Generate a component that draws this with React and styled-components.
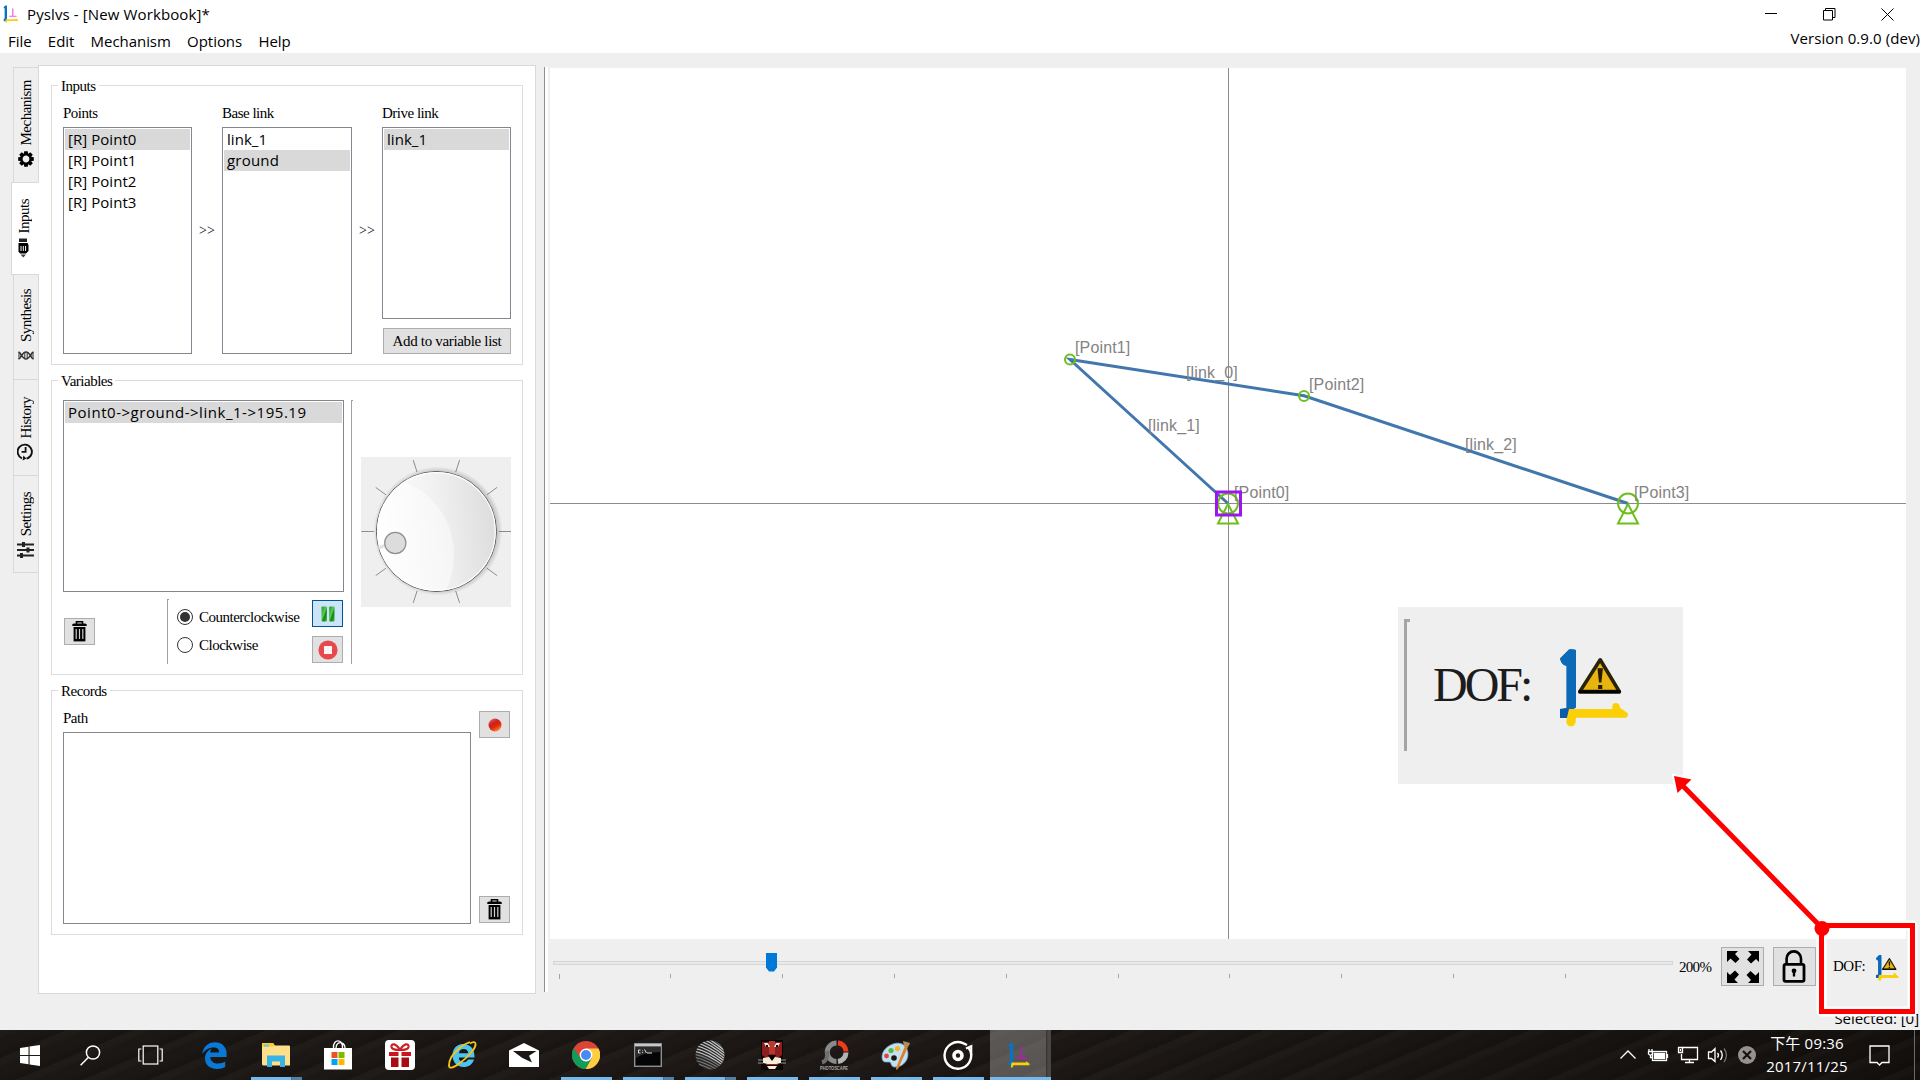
import React from 'react';
import styled, { createGlobalStyle, css } from 'styled-components';

const sans = '"Open Sans", "Noto Sans", "Noto Sans CJK TC", sans-serif';
const serif = '"Liberation Serif", "Noto Sans CJK TC", serif';

const GlobalStyle = createGlobalStyle`
  * { box-sizing: border-box; }
  html, body { margin: 0; padding: 0; background: #efefef; overflow: hidden; }
`;

const Screen = styled.div`
  position: relative;
  display: flex;
  flex-direction: column;
  width: 1920px;
  height: 1080px;
  background: #efefef;
  color: #000;
  font: 15px/20px ${sans};
  white-space: nowrap;
  overflow: hidden;
`;

/* ---------- window chrome ---------- */
const Header = styled.header`
  display: flex;
  justify-content: space-between;
  height: 53px;
  flex: none;
  background: #fff;
`;
const HeaderLeft = styled.div`
  display: flex;
  flex-direction: column;
`;
const TitleRow = styled.div`
  display: flex;
  align-items: center;
  gap: 8px;
  height: 29px;
  padding-left: 3px;
  letter-spacing: 0.12px;
`;
const Menu = styled.nav`
  display: flex;
  align-items: center;
  height: 25px;
  padding-left: 8px;
  gap: 16.3px;
  letter-spacing: -0.05px;
`;
const HeaderRight = styled.div`
  display: flex;
  flex-direction: column;
  align-items: flex-end;
`;
const WindowButtons = styled.div`
  display: flex;
  align-items: center;
  height: 28px;
  padding-right: 26px;
  gap: 45.5px;
`;
const Version = styled.div`
  height: 21px;
  line-height: 20px;
  letter-spacing: 0.08px;
`;

/* ---------- side panel ---------- */
const Workspace = styled.main`
  display: flex;
  height: 941px;
  flex: none;
`;
const TabBar = styled.div`
  display: flex;
  flex-direction: column;
  align-items: flex-end;
  width: 39px;
  padding-top: 14px;
  z-index: 1;
`;
const Tab = styled.div`
  display: flex;
  flex-direction: column;
  align-items: center;
  justify-content: flex-end;
  gap: ${(p) => p.$gap ?? 6}px;
  width: ${(p) => (p.$active ? 28 : 26)}px;
  height: ${(p) => p.$h}px;
  padding-bottom: ${(p) => p.$bottom}px;
  padding-right: ${(p) => (p.$active ? 3 : 1)}px;
  background: ${(p) => (p.$active ? '#fff' : '#efefef')};
  border: 1px solid #d9d9d9;
  border-right-color: ${(p) => (p.$active ? '#fff' : '#d9d9d9')};
  & + & { margin-top: -1px; }
`;
const TabLabel = styled.span`
  writing-mode: vertical-rl;
  transform: rotate(180deg);
  margin-left: 1px;
  font: 15px/18px ${serif};
  letter-spacing: -0.5px;
`;
const Pane = styled.section`
  display: flex;
  flex-direction: column;
  gap: 15px;
  width: 498px;
  height: 929px;
  margin: 12px 0 0 -1px;
  padding: 19px 12px 0 12px;
  background: #fff;
  border: 1px solid #d9d9d9;
`;
const Group = styled.div`
  display: flex;
  flex-direction: column;
  width: 472px;
  height: ${(p) => p.$h}px;
  border: 1px solid #dcdcdc;
  padding: 0 11px;
  font: 15px/18px ${serif};
  letter-spacing: -0.5px;
`;
const GroupTitle = styled.div`
  align-self: flex-start;
  height: 18px;
  margin: -9px 0 0 -5px;
  padding: 0 3px;
  background: #fff;
`;
const InputsBody = styled.div`
  display: flex;
  height: 260px;
  padding-top: 5px;
`;
const Column = styled.div`
  display: flex;
  flex-direction: column;
  flex: none;
  width: ${(p) => p.$w ?? 129}px;
`;
const Caption = styled.div`
  height: 27px;
  padding-top: 4px;
`;
const Chevrons = styled.div`
  display: flex;
  flex: none;
  align-items: center;
  justify-content: center;
  width: 30px;
  padding-top: 7px;
  font-size: 14px;
  letter-spacing: 0;
`;
const List = styled.div`
  width: 100%;
  height: ${(p) => p.$h}px;
  flex: none;
  padding: 1px;
  border: 1px solid #828790;
  background: #fff;
  font: 15px/21px ${sans};
`;
const ListItem = styled.div`
  height: 21px;
  padding-left: 3px;
  letter-spacing: ${(p) => p.$spacing ?? 0.05}px;
  background: ${(p) => (p.$selected ? '#d9d9d9' : 'transparent')};
`;
const Button = styled.button`
  display: flex;
  align-items: center;
  justify-content: center;
  width: ${(p) => p.$w ?? 31}px;
  height: ${(p) => p.$h ?? 27}px;
  flex: none;
  padding: 0;
  font: 15px/18px ${serif};
  letter-spacing: -0.33px;
  color: #000;
  background: #e1e1e1;
  border: 1px solid #adadad;
  ${(p) => p.$checked && css`
    background: #cce4f7;
    border-color: #00549a;
  `}
`;
const AddButton = styled(Button)`
  margin: 9px 0 0 1px;
`;

const VariablesBody = styled.div`
  display: flex;
  padding-top: 10px;
  height: 275px;
`;
const VariableColumn = styled.div`
  display: flex;
  flex-direction: column;
  flex: none;
  width: 281px;
`;
const PlayRow = styled.div`
  display: flex;
  height: 65px;
  margin-top: 7px;
`;
const TrashSlot = styled.div`
  flex: none;
  width: 104px;
  padding: 19px 0 0 1px;
`;
const VLine = styled.div`
  width: 2px;
  flex: none;
  height: ${(p) => p.$h}px;
  margin-left: ${(p) => p.$left ?? 0}px;
  border-left: 1px solid #a0a0a0;
  border-top: 1px solid #a0a0a0;
`;
const Radios = styled.div`
  display: flex;
  flex: none;
  flex-direction: column;
  gap: 10px;
  width: 143px;
  padding: 9px 0 0 8px;
`;
const RadioLine = styled.label`
  display: flex;
  align-items: center;
  height: 18px;
  gap: 6px;
`;
const Radio = styled.span`
  display: flex;
  align-items: center;
  justify-content: center;
  width: 16px;
  height: 16px;
  border: 1px solid #333;
  border-radius: 50%;
  &::after {
    content: '';
    width: 10px;
    height: 10px;
    border-radius: 50%;
    background: ${(p) => (p.$on ? '#333' : 'transparent')};
  }
`;
const PlayButtons = styled.div`
  display: flex;
  flex-direction: column;
  gap: 9px;
  padding-top: 1px;
`;
const DialBox = styled.div`
  flex: none;
  width: 150px;
  height: 150px;
  margin: 57px 0 0 8px;
  background: #efefef;
`;

const RecordsBody = styled.div`
  display: flex;
  gap: 8px;
  padding-top: 10px;
  height: 224px;
`;
const RecordCaption = styled.div`
  height: 23px;
  line-height: 17px;
`;
const RecordButtons = styled.div`
  display: flex;
  flex-direction: column;
  justify-content: space-between;
  height: 212px;
  margin-top: 1px;
`;

const Splitter = styled.div`
  width: 14px;
  padding: 14px 0 0 8px;
  &::before {
    content: '';
    display: block;
    width: 3px;
    height: 925px;
    background: #fff;
    border-left: 1px solid #8f8f8f;
  }
`;

/* ---------- canvas side ---------- */
const CanvasColumn = styled.section`
  display: flex;
  flex-direction: column;
  width: 1356px;
  padding-top: 15px;
`;
const Canvas = styled.div`
  height: 871px;
  flex: none;
  background: #fff;
`;
const ZoomBar = styled.div`
  display: flex;
  height: 55px;
`;
const SliderBox = styled.div`
  flex: none;
  width: 1129px;
`;
const ZoomText = styled.div`
  flex: none;
  width: 42px;
  padding-top: 18px;
  font: 15px/20px ${serif};
  letter-spacing: -0.7px;
`;
const ZoomButtons = styled.div`
  display: flex;
  flex: none;
  gap: 9px;
  padding-top: 8px;
`;
const Dof = styled.div`
  display: flex;
  flex: none;
  padding: 16px 0 0 17px;
  gap: 11px;
  font: 15px/23px ${serif};
  letter-spacing: -0.5px;
`;
const StatusBar = styled.footer`
  display: flex;
  justify-content: flex-end;
  height: 36px;
  flex: none;
  padding: 14px 1px 0 0;
  letter-spacing: -0.05px;
`;

/* ---------- annotations ---------- */
const Callout = styled.div`
  position: absolute;
  left: 1398px;
  top: 607px;
  display: flex;
  width: 285px;
  height: 177px;
  padding: 12px 0 0 6px;
  background: #efefef;
`;
const CalloutLine = styled.div`
  width: 6px;
  height: 132px;
  border-left: 3px solid #a5a5a5;
  border-top: 3px solid #a5a5a5;
`;
const CalloutText = styled.div`
  flex: none;
  width: 150px;
  padding: 41px 0 0 23px;
  font: 48px/50px ${serif};
  letter-spacing: -3px;
  color: #1c1c1c;
`;
const CalloutIcon = styled.div`
  padding-top: 30px;
`;
const Overlay = styled.svg`
  position: absolute;
  left: 0;
  top: 0;
`;

/* ---------- taskbar ---------- */
const Taskbar = styled.div`
  display: flex;
  justify-content: space-between;
  height: 50px;
  flex: none;
  background:
    repeating-linear-gradient(157deg, rgba(255,240,220,.018) 0 5px, transparent 9px 17px, rgba(0,0,0,.12) 22px 26px),
    linear-gradient(90deg, #1b1714, #1d1815 45%, #1a1613 70%, #14100e);
`;
const Apps = styled.div`
  display: flex;
`;
const AppButton = styled.div`
  position: relative;
  display: flex;
  align-items: center;
  justify-content: center;
  width: ${(p) => p.$w ?? 62}px;
  height: 50px;
  padding-left: ${(p) => p.$shift ?? 0}px;
  background: ${(p) => (p.$active ? 'linear-gradient(90deg, rgba(255,255,255,.27) 56px, #33302e 56px, #4a4644 58px, #4a4644)' : 'none')};
  ${(p) => p.$active && css`margin-left: 1px; padding-right: 3px;`}
  &::after {
    content: '';
    position: absolute;
    left: ${(p) => (p.$active ? 0 : 6)}px;
    right: ${(p) => (p.$active ? 0 : 5)}px;
    bottom: 0;
    height: 3px;
    background: ${(p) => (p.$mark === 'many' ? 'linear-gradient(90deg, #76b9ed 0, #76b9ed 40px, #3d5c74 40px, #567fa3 41px)' : p.$mark ? '#76b9ed' : 'none')};
  }
`;
const Tray = styled.div`
  display: flex;
  align-items: center;
  color: #fff;
  padding-right: 5px;
`;
const TrayIcons = styled.svg`
  flex: none;
`;
const Clock = styled.div`
  display: flex;
  flex-direction: column;
  align-items: center;
  width: 90px;
  font: 15px/23px ${sans};
  letter-spacing: 0.2px;
  padding-bottom: 1px;
`;
const Notice = styled.div`
  display: flex;
  align-items: center;
  height: 50px;
  width: 63px;
  padding-left: 17px;
  border-right: 1px solid #6d6967;
`;

/* ---------- icons ---------- */
const Logo = ({ w, h }) => (
  <svg width={w} height={h} viewBox="0 0 23 26">
    <path d="M0 3.2 3 .2Q4 0 5.300.3V19.5L0 23V20L2.200 19.6V5.600Q.600 5.600 0 3.200Z" fill="#0a6ab8" />
    <path d="M0 3.200 3 .2Q4 0 5.300 .3V19.500L2.200 21V5.600Q.6 5.600 0 3.200Z" fill="#0a6ab8" />
    <path d="M0 20H5V23H0Z" fill="#0a5cab" />
    <path d="M3 20H17.400Q17.300 18.200 18.400 18Q20 18 20 19.600L22.600 21.400Q22.800 22.400 22 22.900H5.300Q5.400 25.800 3.700 25.800Q2 25.600 2.100 23.800Z" fill="#fbd008" />
    <path d="M13.400 3.600 6.600 14.200H19.800Z" fill="#e8b40f" stroke="#2a2106" strokeWidth="1.200" strokeLinejoin="round" />
    <path d="M6.200 14.300H20.200" stroke="#000" strokeWidth="1.100" />
    <path d="M12.500 6.400H14.300L13.800 11.200H13ZM12.700 12H14.100V13.300H12.700Z" fill="#241b03" />
  </svg>
);

const AppLogo = ({ pink, w, h }) => (
  <svg width={w} height={h} viewBox="0 0 22 26">
    <path d="M.5 3 3 .8H5.200V20.500L3 23.500H.5V20H1.800V4.800H.5Z" fill="#0a72c4" />
    <path d="M3.500 20.600H18V19.200L21.500 21.600V23.200H5.500L4.500 25.600H2.800Z" fill="#fbd008" />
    <path d="M13.600 5V16M8.400 16.200H19" stroke={pink} strokeWidth="1.700" fill="none" />
  </svg>
);

const TrashIcon = () => (
  <svg width="15" height="21" viewBox="0 0 15 21">
    <path d="M4.5 3V.8H10.5V3" fill="none" stroke="#000" strokeWidth="1.6" />
    <path d="M.3 3.2Q1 2.4 2.4 2.4H12.6Q14 2.4 14.7 3.2V5H.3Z" />
    <path d="M1.6 6H13.4V20.4H1.6Z" />
    <path d="M4.2 8V18M7.5 8V18M10.8 8V18" stroke="#cfcfcf" strokeWidth="1.2" />
  </svg>
);

const GearIcon = () => (
  <svg width="16" height="16" viewBox="-8 -8 16 16">
    {[0, 45, 90, 135].map((a) => (
      <path key={a} d="M-1.8 -7.8H1.8L2.2 -4H-2.2ZM-1.8 7.8H1.8L2.2 4H-2.2Z" transform={`rotate(${a})`} />
    ))}
    <circle r="4.6" fill="none" stroke="#000" strokeWidth="2.4" />
  </svg>
);
const MotorIcon = () => (
  <svg width="12" height="20" viewBox="0 0 12 20">
    <path d="M1 .5H9V4H1Z" fill="#222" />
    <path d="M.5 5H9.5L10.5 7V13L8 15.5H2L.5 13.5Z" />
    <path d="M3 8V13M5.3 8V13M7.6 8V13" stroke="#fff" strokeWidth="1" />
    <path d="M2.5 16.4H8L5.3 19.6Z" fill="#444" />
  </svg>
);
const DnaIcon = () => (
  <svg width="16" height="9" viewBox="0 0 16 9" fill="none" stroke="#333" strokeWidth="1.5">
    <path d="M.5 1C3 1 4 8 8 8S13 1 15.5 1M.5 8C3 8 4 1 8 1S13 8 15.5 8" />
    <path d="M1 1V8M3 3V6M6.800 1.500V7.500M9.200 1.500V7.500M13 3V6M15 1V8" strokeWidth="1" />
  </svg>
);
const HistoryIcon = () => (
  <svg width="17" height="18" viewBox="0 0 17 18" fill="none" stroke="#111">
    <path d="M9.6 15.6A7.1 7.1 0 1 0 5 15.3" strokeWidth="1.9" />
    <path d="M8.6 4V8.8H4.6" strokeWidth="1.8" />
    <path d="M5.6 17.6 9.4 15.6 6.4 12.6Z" fill="#111" stroke="none" />
  </svg>
);
const SlidersIcon = () => (
  <svg width="17" height="16" viewBox="0 0 17 16" stroke="#222" fill="none">
    <path d="M0 2.5H17M0 8H17M0 13.5H17" strokeWidth="2" />
    <path d="M6.5 0V5M11 5.5V10.5M4.5 11V16" strokeWidth="3" />
  </svg>
);

const Dial = () => {
  const cx = 75.4, cy = 74.5;
  return (
    <svg width="150" height="150" viewBox="0 0 150 150">
      <defs>
        <linearGradient id="face" x1="0" y1="0.4" x2="1" y2="0.3">
          <stop offset="0" stopColor="#fff" /><stop offset=".5" stopColor="#f1f1f1" /><stop offset="1" stopColor="#dcdcdc" />
        </linearGradient>
        <radialGradient id="shade"><stop offset=".86" stopColor="#000" stopOpacity=".3" /><stop offset="1" stopColor="#000" stopOpacity="0" /></radialGradient>
        <clipPath id="clip"><circle cx={cx} cy={cy} r="59" /></clipPath>
      </defs>
      {Array.from({ length: 10 }, (_, i) => {
        const a = (i * 36 * Math.PI) / 180;
        return <line key={i} x1={cx + 62.5 * Math.cos(a)} y1={cy + 62.5 * Math.sin(a)} x2={cx + 75 * Math.cos(a)} y2={cy + 75 * Math.sin(a)} stroke="#8c8c8c" />;
      })}
      <circle cx={cx + 1.5} cy={cy - 0.5} r="64.5" fill="url(#shade)" />
      <circle cx={cx} cy={cy} r="60" fill="url(#face)" stroke="#555" />
      <g clipPath="url(#clip)">
        <path d="M40 24C68 32 92 60 93 96Q93 118 84 136L0 150V0Z" fill="#fff" opacity=".45" />
      </g>
      <circle cx={cx} cy={cy} r="58.9" fill="none" stroke="#fff" strokeWidth="1.2" />
      <path d="M17.5 91 24 88.5" stroke="#e3e3e3" strokeWidth="3.4" />
      <circle cx="34.3" cy="86" r="10.6" fill="#dcdcdc" stroke="#8f8f8f" strokeWidth="1.2" />
    </svg>
  );
};

const Pivot = ({ x, y, ground }) => (
  <g fill="none" stroke="#6dbf1d" strokeWidth="2">
    <circle cx={x} cy={y} r={ground ? 10 : 5} />
    {ground ? <path d={`M${x} ${y + 0.5}L${x - 10} ${y + 20}H${x + 10}Z`} /> : null}
  </g>
);

const Linkage = () => (
  <svg width="1356" height="871" viewBox="550 68 1356 871" fontFamily='"Liberation Sans", sans-serif' fontSize="16" letterSpacing=".15" fill="#838383">
    <path d="M1228.5 68V939M550 503.5H1906" stroke="#8c8c8c" strokeWidth="1" />
    <path d="M1228 503.5 1070 359.5 1304 395.8 1628 503.5" fill="none" stroke="#4277ad" strokeWidth="3" />
    <Pivot x={1070} y={359.5} />
    <Pivot x={1304} y={396} />
    <Pivot x={1228} y={503.5} ground />
    <Pivot x={1628} y={503.5} ground />
    <text x="1075" y="353">[Point1]</text>
    <text x="1186" y="378">[link_0]</text>
    <text x="1309" y="390">[Point2]</text>
    <text x="1148" y="431">[link_1]</text>
    <text x="1465" y="450">[link_2]</text>
    <text x="1234" y="498">[Point0]</text>
    <text x="1634" y="498">[Point3]</text>
    <rect x="1216.5" y="492" width="24" height="23" fill="none" stroke="#9b17ee" strokeWidth="3" />
  </svg>
);

const ZoomSlider = () => (
  <svg width="1129" height="55" viewBox="550 939 1129 55">
    <rect x="553.5" y="961.5" width="1119" height="3" fill="#e7eaea" stroke="#d6d6d6" />
    {Array.from({ length: 10 }, (_, i) => (
      <rect key={i} x={Math.floor(559.1 + i * 111.8)} y="974" width="1" height={i ? 4 : 5} fill="#a6a694" />
    ))}
    <path d="M766 953H777V967.5L774 971.5H769L766 967.5Z" fill="#0078d7" />
  </svg>
);

const FitIcon = () => (
  <svg width="32" height="32" viewBox="0 0 32 32">
    {[0, 90, 180, 270].map((a) => (
      <path key={a} d="M0 0H11L8 3L12.5 8L8.5 12L3.5 7.5L0 11Z" transform={`rotate(${a} 16 16)`} />
    ))}
  </svg>
);
const LockIcon = () => (
  <svg width="25" height="34" viewBox="0 0 25 34" fill="none" stroke="#000">
    <path d="M4.6 14V8.6A7.2 7.2 0 0 1 19 8.6V14" strokeWidth="2.6" />
    <rect x="2" y="14.4" width="20" height="17" rx="1.6" strokeWidth="2.8" />
    <path d="M12 21V26.5" strokeWidth="2.4" /><circle cx="12" cy="20.8" r="2.4" fill="#000" stroke="none" />
  </svg>
);

/* taskbar drawings */
const WinIcon = () => <svg width="20" height="21" viewBox="0 0 20 21" fill="#fff"><path d="M0 3 8.5 1.8V10H0ZM9.6 1.6 20 0V10H9.6ZM0 11H8.5V19.2L0 18ZM9.6 11H20V21L9.6 19.4Z" /></svg>;
const SearchIcon = () => <svg width="21" height="21" viewBox="0 0 21 21" fill="none" stroke="#fff" strokeWidth="1.5"><circle cx="13" cy="7.5" r="6.6" /><path d="M8.2 12.4.6 20.2" /></svg>;
const TaskViewIcon = () => <svg width="25" height="20" viewBox="0 0 25 20" fill="none" stroke="#fff" strokeWidth="1.2"><rect x="5.2" y="1" width="14.6" height="18" /><path d="M3.4 4H.8V16H3.4M21.6 4H24.2V16H21.6" /></svg>;
const EdgeIcon = () => (
  <svg width="25" height="27" viewBox="0 0 25 27"><path d="M.2 12.2C1 5 6 .2 13 .2 20 .2 24.6 5 24.6 11.6V15H8.2C8.4 19.4 12 21.6 16 21.6 19 21.6 21.4 20.8 23.2 19.6V25C21 26.3 18 27 15 27 7.600 27 3 22.600 3 16.6 3 12 5.600 8.400 9.600 6.600 8.600 8 8.200 9.400 8.200 10.600H17.200C17.200 7 15.400 5.400 11.600 5.400 7 5.400 2.600 8 .2 12.2Z" fill="#0a78d6" /></svg>
);
const FolderIcon = () => (
  <svg width="28" height="24" viewBox="0 0 28 24"><path d="M0 .8Q0 0 1 0H11L13 2.5H27Q28 2.500 28 3.500V22.5H1L0 21.500Z" fill="#ffe08a" /><path d="M0 0H11L12.500 3.500H0Z" fill="#ffca28" /><rect x="2" y="1.500" width="5" height="2.200" fill="#6ec6e8" /><path d="M5 24V12.500H23V24H18V18.500H10V24Z" fill="#38b4e4" /></svg>
);
const StoreIcon = () => (
  <svg width="30" height="30" viewBox="0 0 30 30"><path d="M10.500 8C10 3 13 .8 15 .8S20 3 19.500 8M13 8C13 4 16 2 18.500 2.800 21 3.600 22 6 22 8" fill="none" stroke="#fff" strokeWidth="1.300" /><path d="M1 8H29V29.500H1Z" fill="#fff" /><path d="M8.500 12H14.500V18H8.500Z" fill="#f25022" /><path d="M15.500 12H21.500V18H15.500Z" fill="#7fba00" /><path d="M8.500 19H14.500V25H8.500Z" fill="#00a4ef" /><path d="M15.500 19H21.500V25H15.500Z" fill="#ffb900" /></svg>
);
const GiftIcon = () => (
  <svg width="30" height="30" viewBox="0 0 30 30"><rect width="30" height="30" rx="4" fill="#fff" /><path d="M15 10C11 3 6 3 6.500 7 7 10 12 10 15 10ZM15 10C19 3 24 3 23.500 7 23 10 18 10 15 10Z" fill="none" stroke="#cf1f24" strokeWidth="2.200" /><path d="M4 12H13.500V16H4ZM16.500 12H26V16H16.500Z" fill="#c8161c" /><path d="M6 17.500H13.500V27H6ZM16.500 17.500H24V27H16.500Z" fill="#a90d12" /></svg>
);
const IeIcon = () => (
  <svg width="29" height="28" viewBox="0 0 29 28"><path d="M15 3C8.500 3 4.500 8 4.500 14.500S9 26 15.500 26C20.500 26 24.500 23.500 26 18.500H20C19 20.600 17.500 21.200 15.700 21.200 13 21.200 11 19.500 10.800 16.500H26.500C27 8 22 3 15 3ZM10.900 12.200C11.300 9.600 13 8 15.600 8S20 9.600 20.300 12.200Z" fill="#4cc3f1" /><path d="M22 2.500C25 .5 28 .5 27.500 4 27 8 20 16 12 22 6 26.500 1 28.500 1 24.500 1 19 5 13 9 9.500 13 5.500 18 2.500 22 1.200" fill="none" stroke="#f3c41a" strokeWidth="1.900" /></svg>
);
const MailIcon = () => <svg width="30" height="24" viewBox="0 0 30 24"><path d="M0 7.500 15 0 30 7.500V24H0Z" fill="#fff" /><path d="M4 8H27.500L20 12.800 23 19.500 13 14.800Z" fill="#1b1714" /></svg>;
const ChromeIcon = () => (
  <svg width="28" height="28" viewBox="-14 -14 28 28"><circle r="14" fill="#db4437" /><path d="M0 -6.500H12.500A14 14 0 0 1 -.5 14L5.600 3.200Z" fill="#ffcd40" /><path d="M-12.200-6.900-5.600 3.200 0 6.500 5.600 3.200-.5 14A14 14 0 0 1 -12.200-6.900Z" fill="#0f9d58" /><circle r="6.400" fill="#fff" /><circle r="5" fill="#4a8af4" /></svg>
);
const CmdIcon = () => (
  <svg width="28" height="24" viewBox="0 0 28 24"><rect x=".7" y=".7" width="26.600" height="22.600" fill="#050505" stroke="#8c9094" strokeWidth="1.400" /><path d="M1 1H27V3.500H1Z" fill="#c5c9cd" /><path d="M2 4H26V9Q10 9 2 15Z" fill="#2b2b2b" /><path d="M6.500 7H4.500V10H6.500M8.500 7.500V8.200M8.500 9.200V10M10.500 6.500 12.500 10M13 10H18" fill="none" stroke="#ddd" strokeWidth="1" /></svg>
);
const SphereIcon = () => (
  <svg width="30" height="30" viewBox="0 0 30 30"><defs><clipPath id="ball"><circle cx="15" cy="15" r="14.500" /></clipPath></defs><circle cx="15" cy="15" r="14.500" fill="#252525" /><g clipPath="url(#ball)" fill="none" strokeWidth="1.300">{Array.from({ length: 14 }, (_, i) => <path key={i} d={`M-2 ${-10 + i * 3}Q12 ${-8 + i * 3} 32 ${10 + i * 2.6}`} stroke={i < 8 ? '#c4c4c4' : '#777'} />)}</g></svg>
);
const LionIcon = () => (
  <svg width="28" height="30" viewBox="0 0 28 30"><rect x="3" width="22" height="30" fill="#0c0505" /><path d="M4 2H24V15L20 18H8L4 15Z" fill="#8e1e1e" /><path d="M11 1H17V14H11Z" fill="#b53a34" /><path d="M6 3H10L12 7H8ZM22 3H18L16 7H20Z" fill="#f0e6cf" /><path d="M8 5H10V7H8ZM18 5H20V7H18Z" fill="#000" /><path d="M10 15H18L15.500 19H12.500Z" fill="#000" /><path d="M5 18 11 17 14 21 17 17 23 18V23L14 25 5 23Z" fill="#f5ecd8" /><path d="M8 24H20V25H8Z" fill="#a02020" /><path d="M9 26H19L17 29H11Z" fill="#f5ecd8" /><path d="M0 20H5M0 23H5M23 20H28M23 23H28" stroke="#bbb" strokeWidth=".8" /></svg>
);
const PhotoscapeIcon = () => (
  <svg width="32" height="36" viewBox="-1 -2 32 36" overflow="visible"><g fill="none" strokeWidth="5"><path d="M17.500 22.500A9 9 0 0 1 17.500 4" stroke="#8a8a8a" /><path d="M19 3.800A9 9 0 0 1 27 12.500" stroke="#f03c1c" /><path d="M27 13.500A9 9 0 0 1 19 22.400" stroke="#b4b4b4" /><path d="M3 23.500Q9 22 8 12" stroke="#6e6e6e" strokeWidth="4" /></g><text x="1" y="31" fontSize="5" fontWeight="bold" fill="#aaa" textLength="28" lengthAdjust="spacingAndGlyphs" fontFamily="Liberation Sans, sans-serif">PHOTOSCAPE</text></svg>
);
const PaintIcon = () => (
  <svg width="30" height="31" viewBox="0 0 30 31"><path d="M12 4C20 1 27 6 27 14S20 28 13 27C9 26 11 22 8 22S1 23 1 17 6 6 12 4Z" fill="#c3dff2" stroke="#6f9fc4" strokeWidth=".8" /><circle cx="5.500" cy="16" r="2.400" fill="#e0463c" /><circle cx="10" cy="10.500" r="2.600" fill="#55b845" /><circle cx="16.500" cy="8.600" r="2.600" fill="#f4b52a" /><circle cx="13" cy="18" r="2.800" fill="#1b1714" /><path d="M24 6 27 7 17 29Q15 31 15 28Z" fill="#d9822b" /><path d="M22 1 29 3Q28 7 25 7.500L23 6Z" fill="#b88a54" /></svg>
);
const GrooveIcon = () => (
  <svg width="30" height="31" viewBox="0 0 30 31" fill="none" stroke="#fff"><path d="M25.500 7.500A13.300 13.300 0 1 1 20 3.200L24 5" strokeWidth="2.400" /><circle cx="15" cy="15.500" r="4" strokeWidth="3.600" /><path d="M28.300 15V6L23 8.500" strokeWidth="2" /></svg>
);

const taskApps = [
  { Icon: WinIcon, w: 60 },
  { Icon: SearchIcon, w: 60 },
  { Icon: TaskViewIcon, w: 60 },
  { Icon: EdgeIcon, w: 65, shift: 4 },
  { Icon: FolderIcon, mark: 'many' },
  { Icon: StoreIcon },
  { Icon: GiftIcon },
  { Icon: IeIcon },
  { Icon: MailIcon },
  { Icon: ChromeIcon, mark: 'one' },
  { Icon: CmdIcon, mark: 'many' },
  { Icon: SphereIcon, mark: 'many' },
  { Icon: LionIcon, mark: 'one' },
  { Icon: PhotoscapeIcon, mark: 'one' },
  { Icon: PaintIcon, mark: 'one' },
  { Icon: GrooveIcon, mark: 'one' },
];

export default function App() {
  return (
    <Screen>
      <GlobalStyle />
      <Header>
        <HeaderLeft>
          <TitleRow><AppLogo w={16} h={18} pink="#f15ae4" />Pyslvs - [New Workbook]*</TitleRow>
          <Menu><span>File</span><span>Edit</span><span>Mechanism</span><span>Options</span><span>Help</span></Menu>
        </HeaderLeft>
        <HeaderRight>
          <WindowButtons>
            <svg width="12" height="13" viewBox="0 0 12 13"><path d="M0 5.500H12" stroke="#000" /></svg>
            <svg width="13" height="13" viewBox="0 0 13 13" fill="none" stroke="#000"><path d="M.5 2.500H9.500V12H.5ZM2.500 2.500V.5H12V9.500H9.500" /></svg>
            <svg width="13" height="13" viewBox="0 0 13 13" stroke="#000"><path d="M.5.5 12.500 12.500M12.500.5.5 12.500" /></svg>
          </WindowButtons>
          <Version>Version 0.9.0 (dev)</Version>
        </HeaderRight>
      </Header>

      <Workspace>
        <TabBar>
          <Tab $h={116} $bottom={15}><TabLabel>Mechanism</TabLabel><GearIcon /></Tab>
          <Tab $h={93} $bottom={16} $gap={5} $active><TabLabel>Inputs</TabLabel><MotorIcon /></Tab>
          <Tab $h={106} $bottom={19} $gap={9}><TabLabel>Synthesis</TabLabel><DnaIcon /></Tab>
          <Tab $h={97} $bottom={14} $gap={5}><TabLabel>History</TabLabel><HistoryIcon /></Tab>
          <Tab $h={98} $bottom={14} $gap={6}><TabLabel>Settings</TabLabel><SlidersIcon /></Tab>
        </TabBar>

        <Pane>
          <Group $h={280}>
            <GroupTitle>Inputs</GroupTitle>
            <InputsBody>
              <Column>
                <Caption>Points</Caption>
                <List $h={227}>
                  <ListItem $selected>[R] Point0</ListItem>
                  <ListItem>[R] Point1</ListItem>
                  <ListItem>[R] Point2</ListItem>
                  <ListItem>[R] Point3</ListItem>
                </List>
              </Column>
              <Chevrons>&gt;&gt;</Chevrons>
              <Column $w={130}>
                <Caption>Base link</Caption>
                <List $h={227}>
                  <ListItem>link_1</ListItem>
                  <ListItem $selected $spacing={0.2}>ground</ListItem>
                </List>
              </Column>
              <Chevrons>&gt;&gt;</Chevrons>
              <Column>
                <Caption>Drive link</Caption>
                <List $h={192}>
                  <ListItem $selected>link_1</ListItem>
                </List>
                <AddButton $w={128} $h={26}>Add to variable list</AddButton>
              </Column>
            </InputsBody>
          </Group>

          <Group $h={295}>
            <GroupTitle>Variables</GroupTitle>
            <VariablesBody>
              <VariableColumn>
                <List $h={192}><ListItem $selected $spacing={0.53}>Point0-&gt;ground-&gt;link_1-&gt;195.19</ListItem></List>
                <PlayRow>
                  <TrashSlot><Button><TrashIcon /></Button></TrashSlot>
                  <VLine $h={65} />
                  <Radios>
                    <RadioLine><Radio $on />Counterclockwise</RadioLine>
                    <RadioLine><Radio />Clockwise</RadioLine>
                  </Radios>
                  <PlayButtons>
                    <Button $checked>
                      <svg width="14" height="16" viewBox="0 0 14 16">
                        <defs><linearGradient id="bar" x1="0" y1="0" x2="1" y2="1"><stop offset="0" stopColor="#1f9a23" /><stop offset=".45" stopColor="#5fc75c" /><stop offset=".62" stopColor="#118814" /><stop offset="1" stopColor="#3fb53d" /></linearGradient></defs>
                        <rect x=".5" y=".5" width="5.400" height="15" rx="1" fill="url(#bar)" /><rect x="8.100" y=".5" width="5.400" height="15" rx="1" fill="url(#bar)" />
                      </svg>
                    </Button>
                    <Button>
                      <svg width="20" height="20" viewBox="0 0 20 20"><circle cx="10" cy="10" r="9.600" fill="#e8474c" /><rect x="6" y="6" width="8" height="8" fill="#f7f4f4" /></svg>
                    </Button>
                  </PlayButtons>
                </PlayRow>
              </VariableColumn>
              <VLine $h={264} $left={7} />
              <DialBox><Dial /></DialBox>
            </VariablesBody>
          </Group>

          <Group $h={245}>
            <GroupTitle>Records</GroupTitle>
            <RecordsBody>
              <Column $w={408}>
                <RecordCaption>Path</RecordCaption>
                <List $h={192} />
              </Column>
              <RecordButtons>
                <Button>
                  <svg width="14" height="14" viewBox="0 0 14 14">
                    <defs><linearGradient id="rec" x1="0.2" y1="0" x2=".8" y2="1"><stop offset="0" stopColor="#d8686c" /><stop offset=".35" stopColor="#cf2020" /><stop offset=".6" stopColor="#e02a05" /><stop offset="1" stopColor="#ff9a4a" /></linearGradient></defs>
                    <circle cx="7" cy="7" r="6.500" fill="url(#rec)" />
                  </svg>
                </Button>
                <Button><TrashIcon /></Button>
              </RecordButtons>
            </RecordsBody>
          </Group>
        </Pane>

        <Splitter />

        <CanvasColumn>
          <Canvas><Linkage /></Canvas>
          <ZoomBar>
            <SliderBox><ZoomSlider /></SliderBox>
            <ZoomText>200%</ZoomText>
            <ZoomButtons>
              <Button $w={43} $h={39}><FitIcon /></Button>
              <Button $w={43} $h={39}><LockIcon /></Button>
            </ZoomButtons>
            <Dof><span>DOF:</span><Logo w={23} h={26} /></Dof>
          </ZoomBar>
        </CanvasColumn>
      </Workspace>

      <StatusBar>Selected: [0]</StatusBar>

      <Taskbar>
        <Apps>
          {taskApps.map(({ Icon, mark, w, shift }, i) => (
            <AppButton key={i} $mark={mark} $w={w} $shift={shift}><Icon /></AppButton>
          ))}
          <AppButton $active $w={61} $mark="one"><AppLogo w={22} h={26} pink="#b01fb0" /></AppButton>
        </Apps>
        <Tray>
          <TrayIcons width="142" height="50" viewBox="1620 1030 142 50" fill="none" stroke="#fff" strokeWidth="1.300">
            <path d="M1620.500 1058.500 1628 1051 1635.500 1058.500" />
            <rect x="1652.500" y="1051.500" width="14" height="9" fill="none" /><path d="M1654.500 1053.500H1664.500V1058.500H1654.500Z" fill="#fff" /><path d="M1667.500 1054V1058M1649 1049V1051M1652 1049V1051M1648.500 1051.500H1652.500V1054L1650.500 1055.500 1648.500 1054ZM1650.500 1055.500V1057.500H1652" />
            <path d="M1682.500 1047.500H1697.500V1059.500H1681.500V1054M1689.500 1059.500V1062.500M1685 1062.500H1694" /><path d="M1678.500 1047.500H1682.500V1052.500H1678.500ZM1680.500 1049V1051" />
            <path d="M1708.500 1052H1711.500L1715 1048.500V1061.500L1711.500 1058.500H1708.500ZM1717.500 1053Q1719.500 1055 1717.500 1057.500M1720.500 1050.500Q1724 1055 1720.500 1060" /><path d="M1724 1048.500Q1729 1055 1724 1062" stroke="#77716e" />
            <circle cx="1747" cy="1055" r="9" fill="#96918e" stroke="none" /><path d="M1743 1051 1751 1059M1751 1051 1743 1059" stroke="#171210" strokeWidth="2.200" />
          </TrayIcons>
          <Clock><span>下午 09:36</span><span>2017/11/25</span></Clock>
          <Notice>
            <svg width="21" height="21" viewBox="0 0 21 21" fill="none" stroke="#fff" strokeWidth="1.300"><path d="M1 1H20V17.500H13L10.500 20 8 17.500H1Z" /></svg>
          </Notice>
        </Tray>
      </Taskbar>

      <Callout>
        <CalloutLine />
        <CalloutText>DOF:</CalloutText>
        <CalloutIcon><Logo w={69} h={78} /></CalloutIcon>
      </Callout>
      <Overlay width="1920" height="1080" viewBox="0 0 1920 1080">
        <g fill="none" stroke="#fff">
          <rect x="1821.500" y="925.500" width="91" height="86" strokeWidth="10" strokeLinejoin="round" />
          <path d="M1822 928 1682 785" strokeWidth="9" />
          <path d="M1674 776 1691.500 779.500 1677.500 793Z" strokeWidth="4" />
          <circle cx="1822" cy="928.500" r="8" strokeWidth="3" />
        </g>
        <rect x="1821.500" y="925.500" width="91" height="86" fill="none" stroke="#f00" strokeWidth="5" />
        <circle cx="1822" cy="928.500" r="7.500" fill="#f00" />
        <path d="M1822 928 1682 785" stroke="#f00" strokeWidth="5" />
        <path d="M1674 776 1691.500 779.500 1677.500 793Z" fill="#f00" />
      </Overlay>
    </Screen>
  );
}
